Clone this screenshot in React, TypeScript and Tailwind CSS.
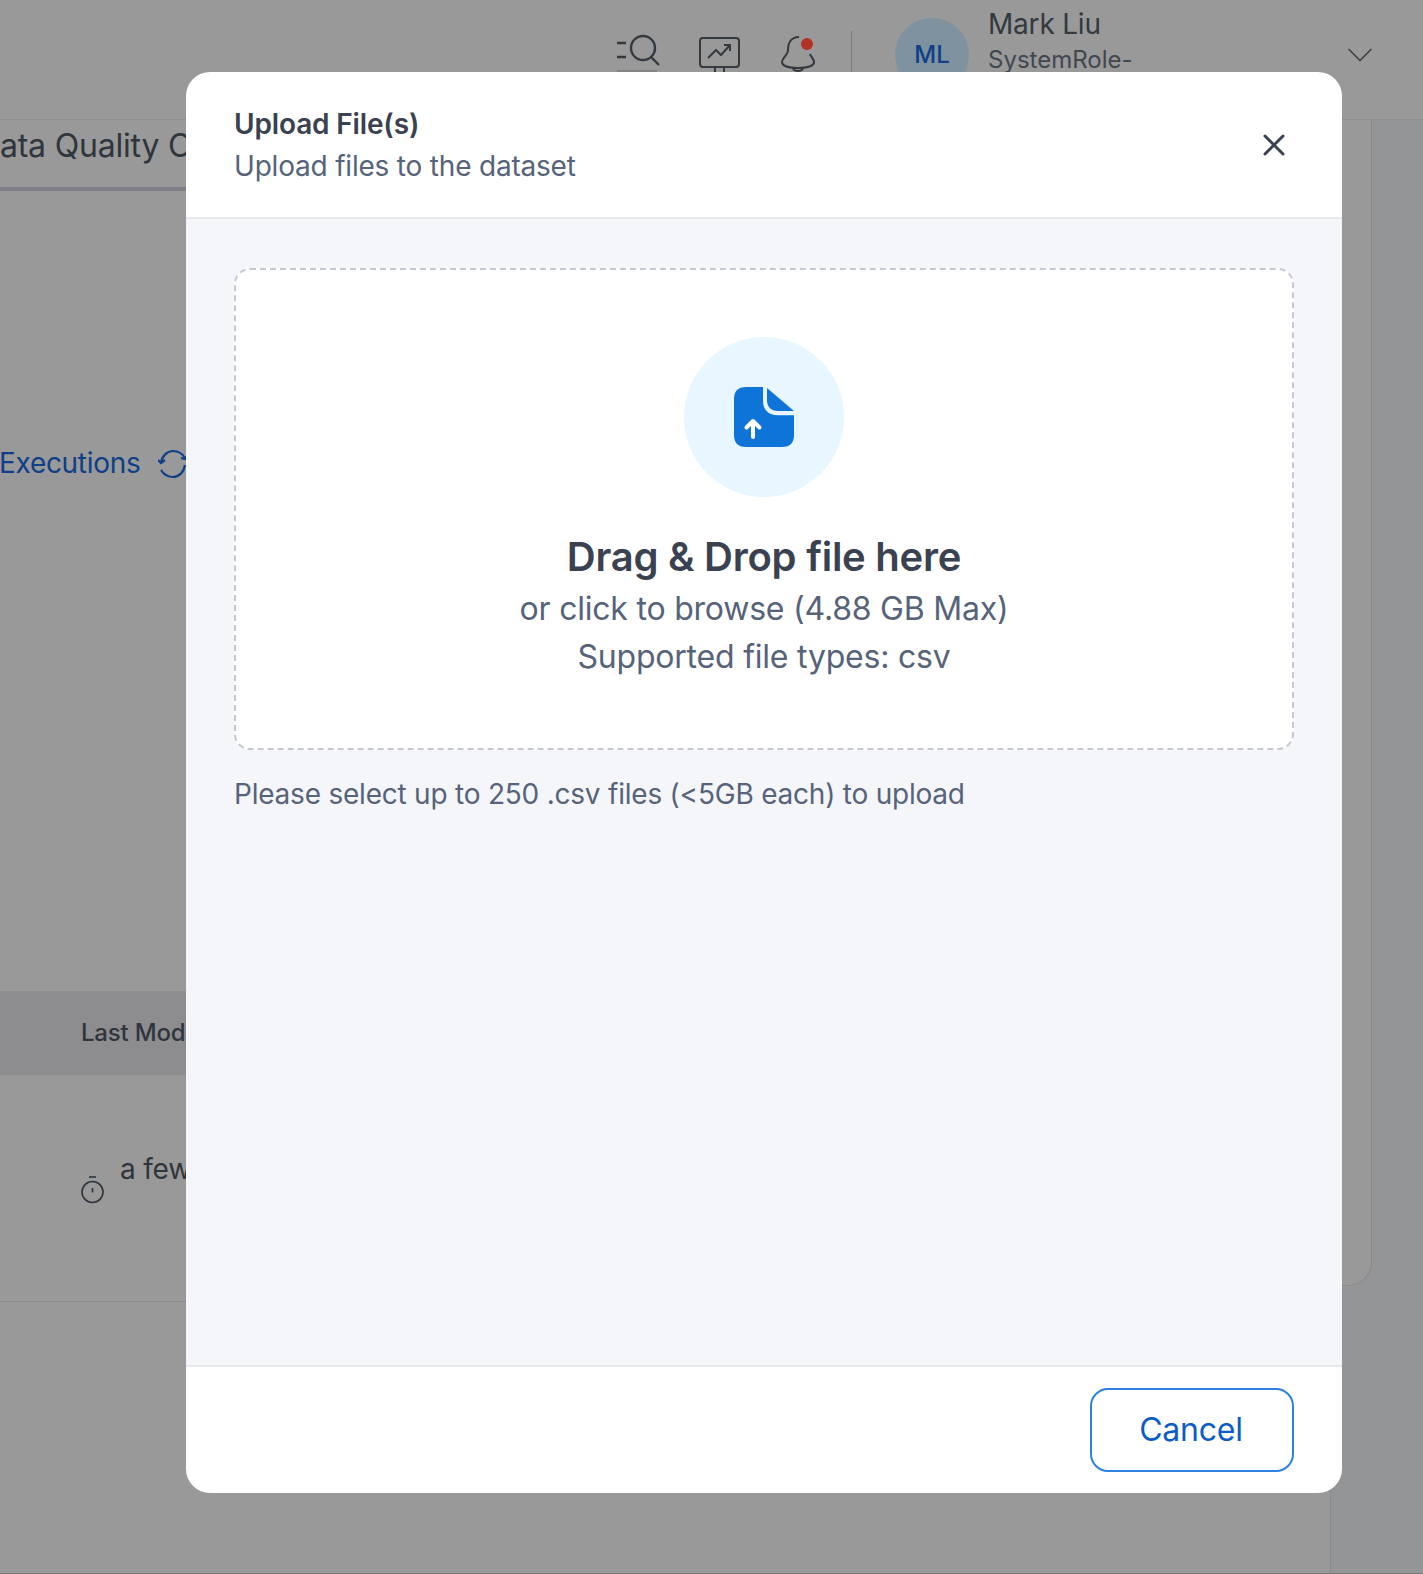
import { ChevronDown, X } from "lucide-react";

function Header() {
  return (
    <header className="flex h-[120px] shrink-0 justify-end border-b border-[#8e8e8e] pr-[41px]">
      <div className="flex h-[72px] items-start">
        <svg width="46" height="40" viewBox="0 0 46 40" fill="none" stroke="#33393f" strokeWidth="2.4" className="mt-[33px]">
          <path d="M1 10h9M1 24h9" />
          <circle cx="27" cy="15" r="12" />
          <path d="M35 24l8 8" />
          <path d="M1 38h40" stroke="#7c7e80" strokeWidth="1.5" />
        </svg>
        <svg width="42" height="42" viewBox="0 0 42 42" fill="none" stroke="#33393f" strokeWidth="2" strokeLinejoin="round" className="ml-[37px] mt-[37px]">
          <rect x="1" y="1" width="39" height="29" rx="3" />
          <path d="M9 21l8-8 5 5 9-10M25 8h6v6" />
          <path d="M16 30v6M25 30v6M11 37h19" />
        </svg>
        <svg width="36" height="40" viewBox="0 0 36 40" fill="none" stroke="#33393f" strokeWidth="2" className="ml-[39px] mt-[34px]">
          <path d="M19 3C11 3 8 9 8 16c0 5-6 8-6 12 0 4 7 6 16 6s16-2 16-6c0-3-3-5-4-8" />
          <path d="M13 34c1 4 9 4 10 0" />
          <circle cx="27" cy="10" r="6" fill="#b23227" stroke="none" />
        </svg>
        <div className="ml-[35px] mt-[31px] h-[41px] w-px bg-[#77797b]" />
        <div className="ml-[43px] mt-[18px] flex h-[74px] w-[74px] shrink-0 items-center justify-center rounded-full bg-[#7e929f] text-2xl font-medium text-[#0f3f88]">
          ML
        </div>
        <div className="ml-[19px] w-[351px] text-[#33393f]">
          <p className="mt-[6px] text-[28px] leading-[36px] tracking-[-0.2px]">Mark Liu</p>
          <p className="text-[24px] leading-[35px] text-[#41474f]">SystemRole-</p>
        </div>
        <ChevronDown size={44} strokeWidth={0.9} className="-ml-[1px] mt-[33px] text-[#3b4046]" />
      </div>
    </header>
  );
}

function Backdrop() {
  return (
    <div className="flex h-full w-full flex-col border-b border-[#7a7a7c] bg-[#999999]">
      <Header />
      <div className="flex flex-1">
        <div className="flex w-[1331px] flex-col border-r border-[#8a8a8c]">
          <div className="mt-[4px] flex h-[67px] w-[186px] items-center overflow-hidden whitespace-nowrap border-b-4 border-[#7f8087] pb-[20px] text-[32px] tracking-[-0.2px] text-[#2f353c]">
            <span className="-ml-[23px]">Data Quality Checks</span>
          </div>
          <div className="mt-[252px] flex w-[186px] items-center gap-[18px] overflow-hidden whitespace-nowrap text-[28px] leading-[40px] tracking-[-0.3px] text-[#0f3f88]">
            <span className="-ml-[1px]">Executions</span>
            <svg width="30" height="30" viewBox="0 0 30 30" fill="none" stroke="#0f3f88" strokeWidth="2.2" className="mt-[2px] shrink-0">
              <path d="M3 14C4 7 9 2 15 2c5 0 9 2 12 7M27 16c-1 7-6 12-12 12-5 0-9-2-12-7" />
              <path d="M0 11l3 3 4-3M23 9l4 1 3-4" />
            </svg>
          </div>
          <div className="mt-[508px] flex h-[84px] w-[186px] items-center overflow-hidden whitespace-nowrap bg-[#8d8d8f] pl-[81px] text-[24px] font-medium tracking-[-0.2px] text-[#2f353c]">
            Last Modified
          </div>
          <div className="flex h-[227px] w-[186px] items-start overflow-hidden whitespace-nowrap border-b border-[#8a8a8a] pl-[81px] text-[#2f353c]">
            <svg width="24" height="30" viewBox="0 0 24 30" fill="none" stroke="#2f353c" strokeWidth="1.6" className="mt-[100px] shrink-0">
              <path d="M8 2h7" />
              <circle cx="11.500" cy="17" r="10.500" />
              <path d="M11.500 13v4.500" />
            </svg>
            <span className="ml-[15px] mt-[73px] text-[28px] tracking-[-0.2px]">a few seconds</span>
          </div>
        </div>
        <div className="flex-1 bg-[#949597]">
          <div className="h-[1166px] w-[41px] rounded-br-[24px] border-r border-b border-[#8a8a8c] bg-[#999999]" />
        </div>
      </div>
    </div>
  );
}

function UploadFileIcon() {
  return (
    <svg width="60" height="60" viewBox="0 0 60 60" aria-hidden="true">
      <path
        d="M12 0H29V14c0 9 6 14.300 15 14.300H60V48c0 8-4 12-12 12H12C4 60 0 56 0 48V12C0 4 4 0 12 0z"
        fill="#0e74d8"
      />
      <path d="M33 1L60 24H44C37 24 33 20 33 13z" fill="#0e74d8" />
      <path d="M19 50V34M12.500 40.500L19 34l6.500 6.500" fill="none" stroke="#ffffff" strokeWidth="4" strokeLinecap="round" strokeLinejoin="round" />
    </svg>
  );
}

function UploadModal() {
  return (
    <div className="absolute left-[186px] top-[72px] flex h-[1421px] w-[1156px] flex-col overflow-hidden rounded-[24px] bg-white">
      <div className="flex h-[147px] shrink-0 items-center justify-between border-b-2 border-[#e6e8ec] pl-[48px] pr-[50px]">
        <div className="pt-[2px]">
          <h2 className="text-[28px] font-semibold leading-[41px] tracking-[-0.15px] text-[#3a4150]">Upload File(s)</h2>
          <p className="mt-[1px] text-[28px] leading-[41px] tracking-[-0.2px] text-[#56637a]">Upload files to the dataset</p>
        </div>
        <X size={36} strokeWidth={2} className="text-[#3a4150]" />
      </div>
      <div className="flex flex-1 flex-col bg-[#f5f6fa] px-[48px] pt-[49px]">
        <div className="flex h-[482px] flex-col items-center rounded-[16px] border-2 border-dashed border-[#c5c8d0] bg-white pt-[67px]">
          <div className="flex h-[160px] w-[160px] items-center justify-center rounded-full bg-[#e7f6ff]">
            <UploadFileIcon />
          </div>
          <p className="mt-[35px] text-[40px] font-semibold leading-[50px] tracking-[-0.25px] text-[#3a4150]">Drag &amp; Drop file here</p>
          <p className="mt-[3px] text-[32px] leading-[48px] tracking-[-0.22px] text-[#56637a]">or click to browse (4.88 GB Max)</p>
          <p className="text-[32px] leading-[48px] tracking-[-0.22px] text-[#56637a]">Supported file types: csv</p>
        </div>
        <p className="mt-[24px] text-[28px] leading-[40px] tracking-[-0.22px] text-[#56637a]">Please select up to 250 .csv files (&lt;5GB each) to upload</p>
      </div>
      <div className="flex h-[128px] shrink-0 items-center justify-end border-t-2 border-[#e6e8ec] pr-[48px]">
        <button className="h-[84px] w-[204px] rounded-[18px] border-2 border-[#2a83e0] pr-[2px] text-[32px] tracking-[-0.2px] text-[#0b5cc4]">Cancel</button>
      </div>
    </div>
  );
}

export default function App() {
  return (
    <div className="relative h-[1574px] w-[1423px] overflow-hidden font-['Inter',sans-serif]">
      <Backdrop />
      <UploadModal />
    </div>
  );
}
